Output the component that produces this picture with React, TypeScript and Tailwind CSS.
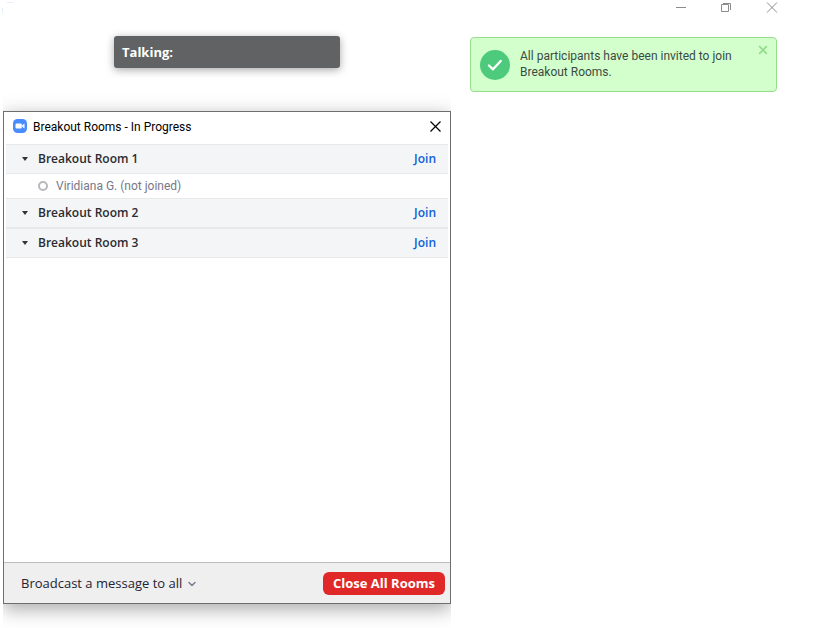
import { useState } from 'react';
import { ChevronDown } from 'lucide-react';

interface Room {
    id: number;
    name: string;
    participants: string[];
}

const ROOMS: Room[] = [
    { id: 1, name: 'Breakout Room 1', participants: ['Viridiana G. (not joined)'] },
    { id: 2, name: 'Breakout Room 2', participants: [] },
    { id: 3, name: 'Breakout Room 3', participants: [] },
];

function ZoomIcon() {
    return (
        <svg viewBox="0 0 14 14" className="h-3.5 w-3.5" aria-hidden="true">
            <rect width="14" height="14" rx="4.5" fill="#4a8cfb" />
            <rect x="2.5" y="4.5" width="6.3" height="5" rx="1.2" fill="#fff" />
            <path d="M9.2 6.2 11.5 4.6v4.8L9.2 7.8z" fill="#fff" />
        </svg>
    );
}

function TitleBar() {
    return (
        <header className="flex h-4 items-start justify-between pr-[38px] text-[#8c8c8c]">
            <svg viewBox="0 0 16 16" className="h-4 w-4" fill="none" stroke="#e3efff" aria-hidden="true">
                <path d="M2.5 13V8M7 2.5h6" />
            </svg>
            <div className="flex gap-[34px]">
                <button type="button" aria-label="Minimize">
                    <svg viewBox="0 0 12 16" className="h-4 w-3" fill="none" stroke="currentColor">
                        <path d="M2 7.5h10" />
                    </svg>
                </button>
                <button type="button" aria-label="Restore">
                    <svg viewBox="0 0 12 16" className="h-4 w-3" fill="none" stroke="currentColor">
                        <path d="M1.5 4.5h7v7h-7zM3 3.5h7.5V10" />
                    </svg>
                </button>
                <button type="button" aria-label="Close">
                    <svg viewBox="0 0 12 16" className="h-4 w-3" fill="none" stroke="currentColor">
                        <path d="M1 2.5l10 10M11 2.5l-10 10" />
                    </svg>
                </button>
            </div>
        </header>
    );
}

function InviteToast({ onClose }: { onClose: () => void }) {
    return (
        <div
            role="status"
            className="flex items-start gap-2.5 rounded border border-[#96de8c] bg-[#d3ffcc] pt-2.5 pr-2 pb-[11px] pl-[9px]"
        >
            <svg viewBox="0 0 30 30" className="mt-0.5 h-[30px] w-[30px] shrink-0" aria-hidden="true">
                <circle cx="15" cy="15" r="15" fill="#4dca7c" />
                <path
                    d="M9 15.5l4 3.8 7.7-8.3"
                    fill="none"
                    stroke="#fff"
                    strokeWidth="2.4"
                    strokeLinecap="round"
                    strokeLinejoin="round"
                />
            </svg>
            <p className="flex-1 text-xs text-[#3b4a44]">
                All participants have been invited to join
                <br />
                Breakout Rooms.
            </p>
            <button type="button" aria-label="Dismiss" onClick={onClose} className="-mt-[3px] text-[#93dc8b]">
                <svg viewBox="0 0 10 10" className="h-2.5 w-2.5" fill="none" stroke="currentColor" strokeWidth="1.8">
                    <path d="M1.2 1.2l7.6 7.6M8.8 1.2L1.2 8.8" />
                </svg>
            </button>
        </div>
    );
}

function RoomGroup({ room }: { room: Room }) {
    const [open, setOpen] = useState(true);

    return (
        <li>
            <div className="flex h-[30px] items-center justify-between border-y border-[#e6e8ea] bg-[#f4f5f7] pr-3 pl-4 font-['Open_Sans',sans-serif] text-xs font-semibold">
                <button
                    type="button"
                    aria-expanded={open}
                    onClick={() => setOpen(!open)}
                    className="flex items-center gap-2.5 text-[#2b2b30]"
                >
                    <svg viewBox="0 0 6 4" className="h-1 w-1.5" aria-hidden="true">
                        <path d="M0 0h6L3 4z" fill="#333" />
                    </svg>
                    {room.name}
                </button>
                <button type="button" className="text-[#0e5fd8]">Join</button>
            </div>
            {open && room.participants.map(name => (
                <div key={name} className="flex h-6 items-center gap-2 pl-8 text-xs text-[#77778a]">
                    <span className="h-2.5 w-2.5 rounded-full border-2 border-[#b9b9bd]" />
                    {name}
                </div>
            ))}
        </li>
    );
}

export default function App() {
    const [showToast, setShowToast] = useState(true);

    return (
        <div className="flex min-h-screen flex-col bg-white font-['Roboto',sans-serif]">
            <TitleBar />
            <main className="grid flex-1 grid-cols-[451fr_365fr] pt-5 pb-6">
                <div className="flex flex-col pl-[3px]">
                    <div className="mx-[111px] mb-[43px] flex h-8 items-center rounded-[3px] bg-[#606263] px-2 pt-0.5 font-['Open_Sans',sans-serif] text-[13px] font-bold text-white shadow-[0_2px_8px_rgba(0,0,0,0.35)]">
                        Talking:
                    </div>

                    {/* Breakout rooms window */}
                    <section className="flex flex-1 flex-col border border-[#6d6e6e] bg-white shadow-[0_5px_18px_rgba(0,0,0,0.35)] [clip-path:inset(-20px_0_-24px_0)]">
                        <div className="flex h-8 items-center gap-1.5 pr-[9px] pb-1 pl-[9px]">
                            <ZoomIcon />
                            <h1 className="flex-1 pt-0.5 text-xs text-black">Breakout Rooms - In Progress</h1>
                            <button type="button" aria-label="Close window">
                                <svg viewBox="0 0 11 11" className="h-[11px] w-[11px]" fill="none" stroke="#000" strokeWidth="1.2">
                                    <path d="M.5 .5l10 10M10.5 .5l-10 10" />
                                </svg>
                            </button>
                        </div>
                        <ul className="mx-0.5 flex-1">
                            {ROOMS.map(room => (
                                <RoomGroup key={room.id} room={room} />
                            ))}
                        </ul>
                        <footer className="flex h-[41px] items-center justify-between border-t border-[#bdbdbd] bg-[#efefef] pr-[5px] pl-[17px] font-['Open_Sans',sans-serif] text-[13px]">
                            <button type="button" className="flex items-center gap-1 pt-0.5 text-[#232333]">
                                Broadcast a message to all
                                <ChevronDown className="h-3 w-3 text-[#7c7c90]" strokeWidth={3} />
                            </button>
                            <button type="button" className="h-[23px] rounded-md bg-[#e02828] px-2.5 pt-px font-bold text-white">
                                Close All Rooms
                            </button>
                        </footer>
                    </section>
                </div>

                <div className="pt-px pr-[39px] pl-[19px]">
                    {showToast && <InviteToast onClose={() => setShowToast(false)} />}
                </div>
            </main>
        </div>
    );
}
